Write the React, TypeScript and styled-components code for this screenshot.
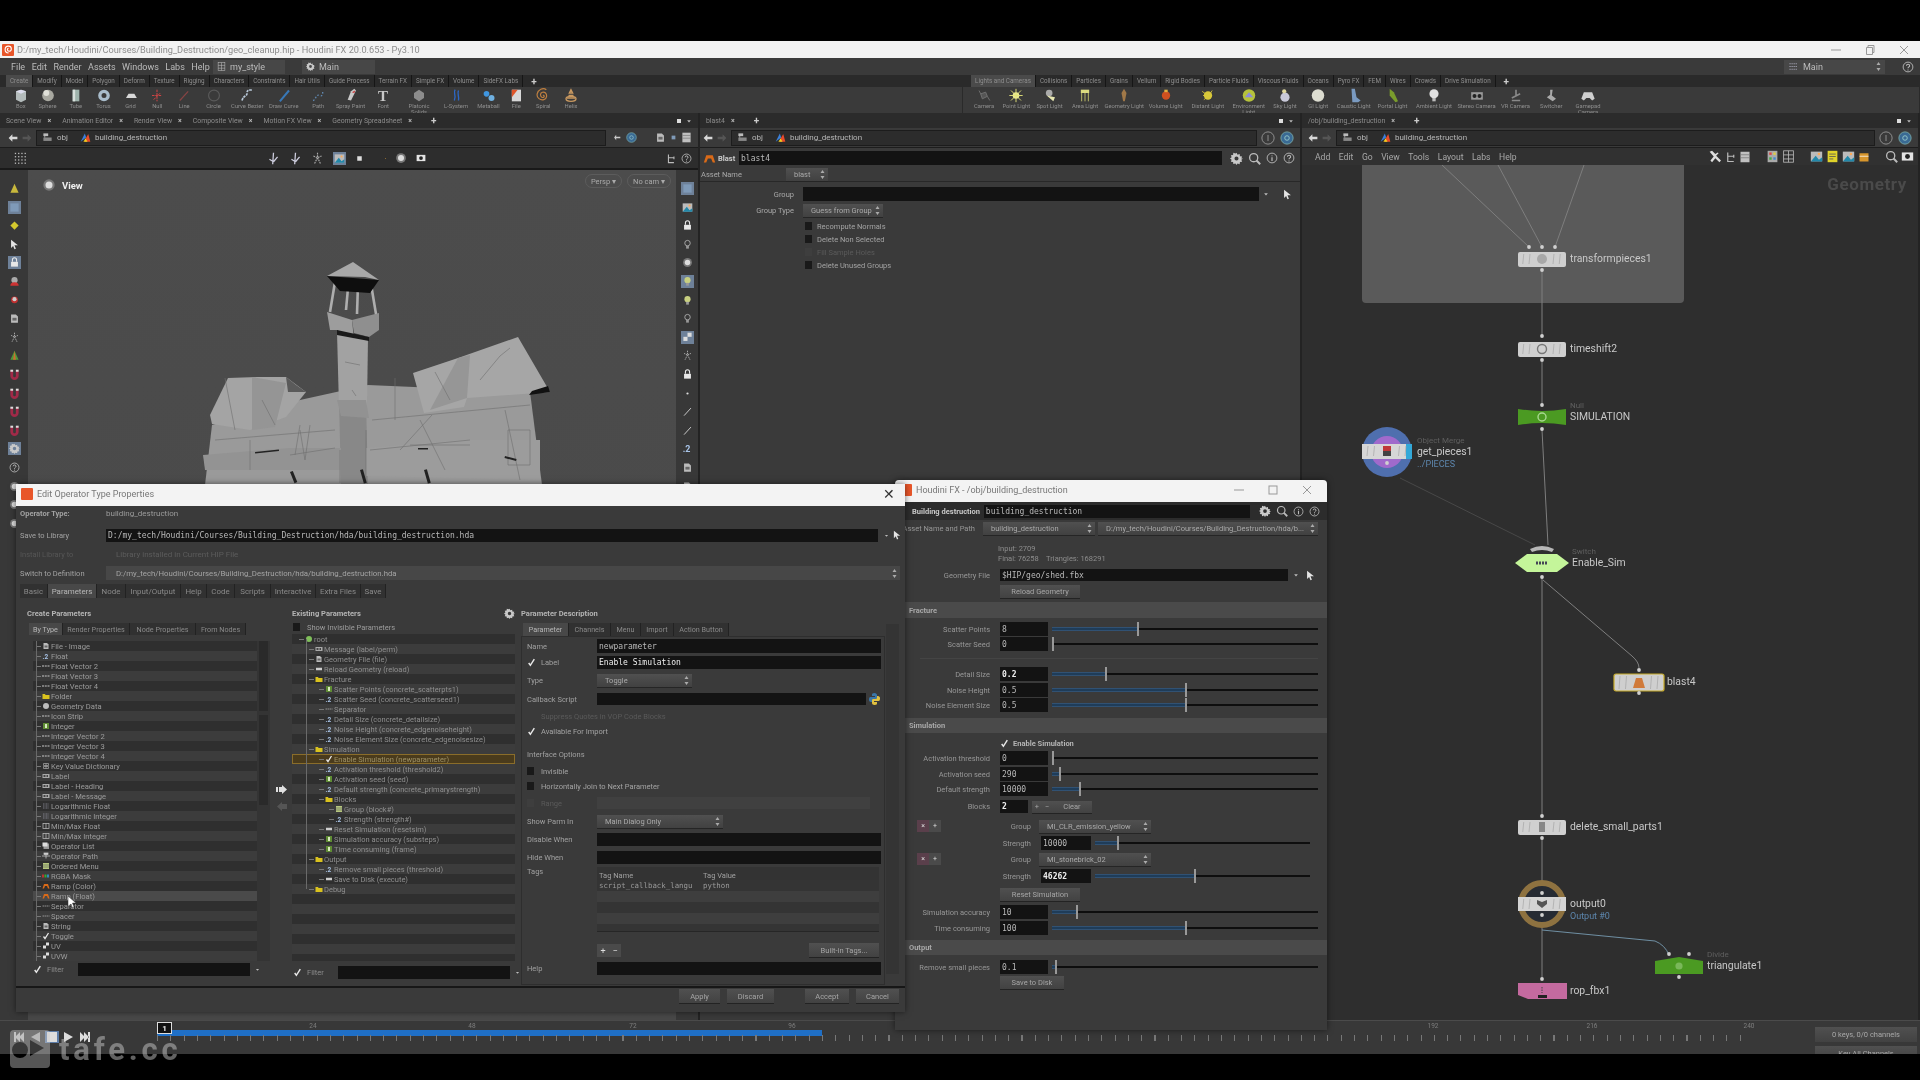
import React from 'react';
import styled, { createGlobalStyle } from 'styled-components';

const Global = createGlobalStyle`
  html, body { margin: 0; padding: 0; background: #000; }
  body { width: 1920px; height: 1080px; overflow: hidden; font-family: Roboto, "Noto Sans", sans-serif; }
`;

const MONO = '"DejaVu Sans Mono", "Liberation Mono", monospace';

/* ---------- shared glyphs ---------- */
const small: Record<string, React.ReactNode> = {
  gear: <path d="M8 1l1.3 2.4 2.6-.9.3 2.7 2.7.3-.9 2.5L16 8l-2 1.5.9 2.5-2.7.3-.3 2.7-2.6-.9L8 16l-1.3-2-2.6.9-.3-2.7-2.7-.3.9-2.5L0 8l2-1.5-.9-2.5 2.7-.3.3-2.7 2.6.9zM8 5.500a2.500 2.500 0 100 5 2.500 2.500 0 000-5z" fill="#c8c8c8" fillRule="evenodd" />,
  search: <g fill="none" stroke="#bbb" strokeWidth="1.6"><circle cx="7" cy="7" r="5" /><path d="M10.500 10.500L15 15" strokeWidth="2.4" /></g>,
  info: <g fill="none" stroke="#bbb" strokeWidth="1.2"><circle cx="8" cy="8" r="6.5" /><path d="M8 4.500v1M8 7v5" strokeWidth="1.6" /></g>,
  help: <g fill="none" stroke="#bbb" strokeWidth="1.2"><circle cx="8" cy="8" r="6.5" /><path d="M6 6.200c0-2.600 4.200-2.600 4.200 0 0 1.800-2.200 1.600-2.200 3.600M8 11.200v1.300" strokeWidth="1.4" /></g>,
  folder: <path d="M1 4h5l1 2h8v8H1z" fill="#d9c21e" />,
  float: <text x="1" y="13" fontSize="13" fontWeight="700" fill="#a8c4e8" fontFamily="Roboto">.2</text>,
  int: <g><rect x="2" y="2" width="12" height="12" fill="#5f8c34" /><rect x="6" y="4" width="4" height="8" fill="#d8e8c0" /></g>,
  toggle: <path d="M3 9l3 4 7-11" fill="none" stroke="#e8e8e8" strokeWidth="2.6" />,
  button: <rect x="2" y="5.5" width="12" height="5" fill="#cfcfcf" />,
  sep: <path d="M1 8h14" stroke="#aaa" strokeWidth="1.6" strokeDasharray="3 1" />,
  vec: <path d="M0 8h16" stroke="#c8c8c8" strokeWidth="2" strokeDasharray="4 1.5" />,
  file: <g><path d="M3 2h7l3 3v9H3z" fill="#bbb" /><rect x="5" y="7" width="6" height="4" fill="#666" /></g>,
  label: <g><rect x="1" y="4" width="14" height="8" fill="#aaa" /><rect x="3" y="6" width="4" height="4" fill="#444" /><rect x="9" y="6" width="3" height="4" fill="#444" /></g>,
  geo: <circle cx="8" cy="8" r="6" fill="#bdbdbd" />,
  root: <circle cx="8" cy="8" r="6" fill="#7fbf5a" />,
  minmax: <g fill="none" stroke="#bbb" strokeWidth="1.5"><rect x="2" y="3" width="12" height="10" /><path d="M8 3v10" /></g>,
  log: <path d="M2 4h12M2 8h12M2 12h12" stroke="#aab" strokeWidth="1.2" strokeDasharray="2 1" />,
  dict: <g fill="none" stroke="#aaa" strokeWidth="1.4"><path d="M3 3h10v4H3zM3 9h10v4H3zM8 3v10" /></g>,
  oplist: <g><rect x="3" y="3" width="11" height="11" fill="#999" /><rect x="1" y="1" width="10" height="8" fill="#ddd" /></g>,
  oppath: <g stroke="#ccc" strokeWidth="1.5"><path d="M0 8h16M8 3v10" /><rect x="4" y="2" width="8" height="3" fill="#ccc" /></g>,
  menu: <g><rect x="2" y="2" width="12" height="12" fill="#b7c77e" /><path d="M2 6h12M2 10h12" stroke="#445" /></g>,
  rgba: <g><rect x="0" y="5" width="4" height="6" fill="#b33" /><rect x="5" y="5" width="4" height="6" fill="#3a3" /><rect x="10" y="5" width="4" height="6" fill="#38b" /></g>,
  ramp: <path d="M1 13l3-9h8l3 9h-3l-2-5H6l-2 5z" fill="#d96a18" />,
  uv: <g><rect x="8" y="1" width="6" height="6" fill="#ddd" /><rect x="2" y="7" width="6" height="6" fill="#ddd" /></g>,
  back: <path d="M1 8l6-6v4h8v4H7v4z" fill="#d8d8d8" />,
  fwd: <path d="M15 8l-6-6v4H1v4h8v4z" fill="#555" />,
  objn: <g><rect x="2" y="2" width="7" height="4" fill="#bbb" /><path d="M2 8h12v5H2z" fill="#888" /><path d="M4 6v2" stroke="#ddd" /></g>,
  hda: <g><path d="M1 14L7 2l2 6z" fill="#3b7fd8" /><path d="M7 14l2-6 3-5 3 11z" fill="#e84a2a" /><path d="M5 14l3-5 3 5z" fill="#f0d020" /></g>,
  pin: <path d="M1 8h5l3-4v3h6v2H9v3L6 8" fill="#ccc" />,
  ring1: <g fill="none" stroke="#9a9a9a" strokeWidth="1"><circle cx="8" cy="8" r="7" /><path d="M8 4.500v7" /></g>,
  ring2: <g><circle cx="8" cy="8" r="7" fill="#3a6a94" stroke="#7aa" /><circle cx="8" cy="8" r="2.6" fill="none" stroke="#9cc" /></g>,
  arrow: <path d="M3 1l10 8H8l2 5-2 1-2-5-3 3z" fill="#e4e4e4" />,
  wrench: <path d="M2 2l5 6-4 5 2 2 4-5 5 5 2-2-6-6 3-3-1-1-3 2-4-4z" fill="#ddd" />,
  sheet: <g><rect x="2" y="1" width="12" height="14" fill="#c0c0c0" /><path d="M2 5h12M2 9h12" stroke="#777" /></g>,
  tree: <path d="M5 2v12h8M5 7h8M13 5v4" stroke="#bbb" strokeWidth="1.6" fill="none" />,
  colors: <g><rect x="2" y="1" width="12" height="14" fill="#aaa" /><rect x="4" y="3" width="3" height="3" fill="#d44" /><rect x="9" y="3" width="3" height="3" fill="#dc4" /><rect x="4" y="9" width="3" height="3" fill="#4a4" /><rect x="9" y="9" width="3" height="3" fill="#48c" /></g>,
  grid3: <g stroke="#bbb" fill="none"><rect x="2" y="1" width="12" height="14" /><path d="M2 6h12M2 11h12M8 1v14" /></g>,
  note: <g><rect x="2" y="1" width="12" height="14" fill="#e0d32a" /><path d="M4 5h8M4 8h8M4 11h5" stroke="#555" /></g>,
  img: <g><rect x="1" y="2" width="14" height="12" fill="#bbb" /><path d="M1 14l6-7 4 5 4-3v5z" fill="#28a" /><circle cx="11" cy="5" r="1.5" fill="#fa5" /></g>,
  box3: <g><rect x="2" y="3" width="12" height="11" fill="#d8962c" /><path d="M2 7h12" stroke="#fff" /></g>,
  cam: <g><rect x="1" y="3" width="14" height="10" fill="#e4e4e4" /><circle cx="8" cy="8" r="3" fill="#222" /></g>,
  dots: <g fill="#bbb">{[2, 6, 10, 14].map(x => [2, 6, 10, 14].map(y => <rect key={`${x}-${y}`} x={x - 1} y={y - 1} width="1.6" height="1.6" />))}</g>,
  handle: <g><path d="M8 1l-1 14M3 9l5 3M13 6l-5 6" stroke="#ccd" strokeWidth="1.6" fill="none" /></g>,
  sel: <rect x="2" y="2" width="12" height="12" fill="#7f9ab8" />,
  white: <rect x="4" y="4" width="8" height="8" fill="#ddd" />,
  drop: <path d="M3 6h10L8 12z" fill="#bbb" />,
  cone: <path d="M8 1l6 13H2z" fill="#c8b83c" />,
  diamond: <path d="M8 2l6 6-6 6-6-6z" fill="#d4c82e" />,
  lock: <g><rect x="3" y="7" width="10" height="7" fill="#e8e8e8" /><path d="M5 7V4a3 3 0 016 0v3" fill="none" stroke="#e8e8e8" strokeWidth="1.6" /></g>,
  red: <g><circle cx="8" cy="6" r="4.5" fill="#aaa" /><path d="M2 14c0-4 3-5 6-5s6 1 6 5z" fill="#c33" /></g>,
  red2: <g><circle cx="8" cy="7" r="5" fill="#c03030" /><circle cx="8" cy="6" r="3" fill="#ccc" /></g>,
  man: <path d="M8 1v5M3 5l5 2 5-2M8 7l-4 8M8 7l4 8" stroke="#aaa" strokeWidth="1.4" fill="none" strokeDasharray="2 1" />,
  tri: <g><path d="M8 1l6 13H2z" fill="#4e9a3a" /><path d="M8 1l2 13H6z" fill="#d06a30" /></g>,
  mag: <g><path d="M2 2h4v8a2 2 0 004 0V2h4v8a6 6 0 01-12 0z" fill="#a02a48" /><rect x="2" y="1" width="4" height="3" fill="#ddd" /><rect x="10" y="1" width="4" height="3" fill="#ddd" /></g>,
  bulb: <g><circle cx="8" cy="6" r="4.5" fill="#c8d080" /><rect x="6" y="10" width="4" height="4" fill="#999" /></g>,
  bulbp: <g><circle cx="8" cy="6" r="4" fill="none" stroke="#ccc" /><rect x="6" y="10" width="4" height="4" fill="#999" /></g>,
  dot: <circle cx="8" cy="8" r="1.6" fill="#ddd" />,
  stroke: <path d="M3 14L13 3" stroke="#ccc" strokeWidth="1.4" />,
  ring: <g><circle cx="8" cy="8" r="6.5" fill="#777" /><circle cx="8" cy="8" r="4" fill="#ddd" /></g>,
  sq: <path d="M3 2v12M3 2h10" stroke="#bbb" strokeWidth="1.5" fill="none" />,
};

const Glyph = ({ k, s = 10 }: { k: string; s?: number }) => (
  <svg width={s} height={s} viewBox="0 0 16 16" style={{ flex: 'none', display: 'block' }}>{small[k]}</svg>
);

const Chevrons = () => (
  <svg width="5" height="9" viewBox="0 0 5 9" style={{ flex: 'none' }}>
    <path d="M2.500 0l2 3h-4zM2.500 9l2-3h-4z" fill="#aaa" />
  </svg>
);

/* ---------- page frame ---------- */
const Page = styled.div`
  position: relative;
  width: 1920px;
  height: 1080px;
  padding-top: 41px;
  box-sizing: border-box;
  background: #000;
  overflow: hidden;
  filter: blur(0.6px);
  font-size: 7.5px;
  color: #b4b4b4;
`;
const Houdini = styled.div`
  display: flex;
  flex-direction: column;
  height: 1013px;
  background: #3a3a3a;
`;
const TitleBar = styled.div`
  height: 17px;
  flex: none;
  background: #f2f2f2;
  display: flex;
  align-items: center;
  padding: 0 0 0 2px;
  gap: 3px;
  color: #8d8d8d;
  font-size: 9.2px;
`;
const AppLogo = styled.span`
  width: 12px;
  height: 12px;
  flex: none;
  background: #e8562a;
  border-radius: 1px;
  display: flex;
  align-items: center;
  justify-content: center;
`;
const Spacer = styled.span`flex: 1;`;
const WinControls = styled.div`
  display: flex;
  align-items: center;
  gap: 24px;
  padding-right: 11px;
`;
const MenuBar = styled.div`
  height: 17px;
  flex: none;
  display: flex;
  align-items: center;
  background: #3a3a3a;
  padding-left: 11px;
  font-size: 9px;
  color: #bcbcbc;
`;
const MenuItems = styled.div`
  display: flex;
  gap: 6.5px;
  width: 202px;
`;
const Selector = styled.div<{ $w: number }>`
  width: ${p => p.$w}px;
  height: 14px;
  background: #474747;
  display: flex;
  align-items: center;
  padding: 0 4px;
  gap: 4px;
  box-sizing: border-box;
  margin-right: 17px;
  font-size: 9px;
`;
const MenuEnd = styled.div`
  display: flex;
  align-items: center;
  padding-right: 6px;
`;

/* ---------- shelves ---------- */
const ShelfRow = styled.div`
  height: 38px;
  flex: none;
  display: flex;
`;
const ShelfSet = styled.div<{ $w?: number }>`
  ${p => (p.$w ? `width: ${p.$w}px; flex: none;` : 'flex: 1;')}
  display: flex;
  flex-direction: column;
  border-right: 1px solid #2a2a2a;
  box-sizing: border-box;
`;
const ShelfTabs = styled.div<{ $pad: number }>`
  height: 12px;
  flex: none;
  background: #2a2a2a;
  display: flex;
  align-items: center;
  padding-left: ${p => p.$pad}px;
  font-size: 6.3px;
  color: #8e8e8e;
`;
const ShelfTab = styled.span<{ $on?: boolean }>`
  height: 12px;
  display: flex;
  align-items: center;
  padding: 0 4px;
  white-space: nowrap;
  border-right: 1px solid #161616;
  background: ${p => (p.$on ? '#4a4a4a' : 'transparent')};
`;
const PlusMark = styled.span`
  color: #ccc;
  font-size: 10px;
  font-weight: 700;
  padding: 0 8px;
`;
const ShelfTools = styled.div<{ $pad: number }>`
  flex: 1;
  display: flex;
  padding-left: ${p => p.$pad}px;
  background: #3a3a3a;
  border-bottom: 1px solid #242424;
`;
const Tool = styled.div<{ $w: number }>`
  width: ${p => p.$w}px;
  flex: none;
  display: flex;
  flex-direction: column;
  align-items: center;
  padding-top: 1px;
  font-size: 5.8px;
  line-height: 6px;
  color: #8f8f8f;
  text-align: center;
`;

/* ---------- panes ---------- */
const Panes = styled.div`
  flex: 1;
  display: flex;
  min-height: 0;
`;
const Pane = styled.div<{ $w?: number }>`
  ${p => (p.$w ? `width: ${p.$w}px; flex: none;` : 'flex: 1;')}
  display: flex;
  flex-direction: column;
  min-width: 0;
  border-right: 2px solid #232323;
  box-sizing: border-box;
`;
const PaneTabs = styled.div`
  height: 15px;
  flex: none;
  background: #2b2b2b;
  display: flex;
  align-items: center;
  font-size: 6.9px;
  color: #8c8c8c;
  padding-left: 6px;
`;
const PaneTab = styled.span`
  display: flex;
  align-items: center;
  gap: 6px;
  padding-right: 11px;
  white-space: nowrap;
`;
const TabClose = styled.span`
  color: #bbb;
  font-size: 7px;
  font-weight: 700;
`;
const TabEnd = styled.span`
  margin-left: auto;
  display: flex;
  gap: 3px;
  align-items: center;
  padding-right: 6px;
`;
const PathBar = styled.div<{ $left: number }>`
  height: 20px;
  flex: none;
  display: flex;
  align-items: center;
  padding: 0 6px 0 ${p => p.$left}px;
  gap: 4px;
  background: #3a3a3a;
  border-bottom: 1px solid #1d1d1d;
  box-sizing: border-box;
`;
const PathField = styled.div`
  flex: 1;
  height: 16px;
  background: #2c2c2c;
  border: 1px solid #1c1c1c;
  display: flex;
  align-items: center;
  gap: 4px;
  padding: 0 5px;
  font-size: 8px;
  color: #b8b8b8;
  box-sizing: border-box;
`;
const PathCrumb = styled.span`
  margin-right: 8px;
`;
const PathEnd = styled.div`
  display: flex;
  align-items: center;
  gap: 5px;
`;
const SceneTools = styled.div`
  height: 22px;
  flex: none;
  display: flex;
  align-items: center;
  padding: 0 6px 0 14px;
  background: #2d2d2d;
  border-bottom: 2px solid #191919;
  box-sizing: border-box;
`;
const ToolCluster = styled.div`
  display: flex;
  align-items: center;
  gap: 9px;
  margin-left: 240px;
`;
const SceneBody = styled.div`
  flex: 1;
  display: flex;
  min-height: 0;
`;
const SideTools = styled.div<{ $w: number }>`
  width: ${p => p.$w}px;
  flex: none;
  display: flex;
  flex-direction: column;
  align-items: center;
  gap: 5.6px;
  padding-top: 12px;
  background: #383838;
`;
const SideIcon = styled.span<{ $on?: boolean }>`
  display: flex;
  padding: 1px;
  background: ${p => (p.$on ? '#6e8199' : 'transparent')};
`;
const Viewport = styled.div`
  flex: 1;
  position: relative;
  background: linear-gradient(#4c4c4c, #484848);
`;
const ViewTitle = styled.div`
  position: absolute;
  left: 14px;
  top: 8px;
  display: flex;
  align-items: center;
  gap: 6px;
  color: #eee;
  font-weight: 700;
  font-size: 9.5px;
`;
const CamPills = styled.div`
  position: absolute;
  top: 4px;
  right: 5px;
  display: flex;
  gap: 5px;
`;
const CamPill = styled.span`
  height: 12px;
  padding: 0 5px;
  display: flex;
  align-items: center;
  border: 1px solid #5c5c5c;
  border-radius: 7px;
  font-size: 7.5px;
  color: #aaa;
`;
const BuildingArt = styled.svg`
  position: absolute;
  inset: 0;
`;

/* ---------- parameter pane ---------- */
const ParamHead = styled.div`
  height: 20px;
  flex: none;
  display: flex;
  align-items: center;
  padding: 0 5px 0 3px;
  gap: 2px;
  font-size: 7.5px;
  font-weight: 700;
  color: #ccc;
`;
const DarkInput = styled.div<{ $w?: number; $bold?: boolean; $lit?: boolean; $h?: number }>`
  ${p => (p.$w ? `width: ${p.$w}px; flex: none;` : 'flex: 1;')}
  height: ${p => p.$h || 14}px;
  background: #131313;
  color: ${p => (p.$bold || p.$lit ? '#eee' : '#b9b9b9')};
  font-family: ${MONO};
  font-size: 8px;
  font-weight: ${p => (p.$bold ? 700 : 400)};
  display: flex;
  align-items: center;
  padding: 0 2px;
  box-sizing: border-box;
  white-space: nowrap;
  overflow: hidden;
`;
const IconGroup = styled.div<{ $gap?: number; $pl?: number }>`
  display: flex;
  align-items: center;
  gap: ${p => p.$gap ?? 5}px;
  padding-left: ${p => p.$pl ?? 0}px;
`;
const BlastAsset = styled.div`
  height: 13px;
  flex: none;
  display: flex;
  align-items: center;
  padding-left: 1px;
  border-bottom: 1px solid #282828;
  gap: 46px;
  color: #a8a8a8;
`;
const Dropdown = styled.div<{ $w: number; $ml?: number }>`
  width: ${p => p.$w}px;
  flex: none;
  margin-left: ${p => p.$ml ?? 0}px;
  height: 13px;
  background: linear-gradient(#505050, #414141);
  box-shadow: 0 1px 0 #252525;
  display: flex;
  align-items: center;
  justify-content: space-between;
  padding: 0 3px 0 8px;
  box-sizing: border-box;
  font-size: 7.5px;
  color: #aaa;
  white-space: nowrap;
  overflow: hidden;
`;
const BlastForm = styled.div`
  display: flex;
  flex-direction: column;
  padding-top: 5px;
`;
const BlastRow = styled.div<{ $h: number; $mt?: number }>`
  height: ${p => p.$h}px;
  margin-top: ${p => p.$mt ?? 0}px;
  display: flex;
  align-items: center;
  gap: 4px;
`;
const BlastLabel = styled.span`
  width: 99px;
  flex: none;
  text-align: right;
  padding-right: 5px;
  box-sizing: border-box;
  color: #a8a8a8;
`;
const CheckBox = styled.span<{ $dim?: boolean }>`
  width: 7px;
  height: 8px;
  flex: none;
  background: ${p => (p.$dim ? '#3e3e3e' : '#191919')};
`;
const CheckLabel = styled.span<{ $dim?: boolean }>`
  color: ${p => (p.$dim ? '#5a5a5a' : '#a4a4a4')};
  white-space: nowrap;
`;
const BlastChecks = styled.div`
  display: flex;
  flex-direction: column;
  gap: 5px;
  padding: 5px 0 0 105px;
`;
const CheckLine = styled.div`
  display: flex;
  height: 8px;
  align-items: center;
  gap: 5px;
`;

/* ---------- network ---------- */
const NetMenu = styled.div`
  height: 17px;
  flex: none;
  display: flex;
  align-items: center;
  padding: 0 4px 0 13px;
  gap: 8.5px;
  font-size: 8.6px;
  color: #a8a8a8;
  background: #313131;
`;
const NetIcons = styled.div`
  margin-left: auto;
  display: flex;
  align-items: center;
  gap: 3px;
`;
const NetGap = styled.span`
  width: 9px;
`;
const Canvas = styled.div`
  flex: 1;
  position: relative;
  background: #2e2e2e;
  overflow: hidden;
`;
const NetBox = styled.div`
  position: absolute;
  left: 60px;
  top: 0;
  width: 322px;
  height: 138px;
  background: #5a5a5a;
  border-radius: 0 0 4px 4px;
`;
const NetKind = styled.div`
  position: absolute;
  right: 11px;
  top: 9px;
  font-size: 17px;
  font-weight: 700;
  letter-spacing: 0.6px;
  color: #4a4a4a;
`;
const Wires = styled.svg`
  position: absolute;
  inset: 0;
`;
const NodeWrap = styled.div<{ $x: number; $y: number }>`
  position: absolute;
  left: ${p => p.$x}px;
  top: ${p => p.$y}px;
  width: 0;
  height: 0;
`;
const NodeArt = styled.svg`
  position: absolute;
  left: -30px;
  top: -30px;
`;
const NodeText = styled.div<{ $dx: number }>`
  position: absolute;
  left: ${p => p.$dx}px;
  top: -7px;
  font-size: 10.4px;
  line-height: 13px;
  color: #c8c8c8;
  white-space: nowrap;
`;
const NodeType = styled.div`
  position: absolute;
  left: 0;
  top: -9px;
  font-size: 8px;
  line-height: 10px;
  color: #5f5f5f;
`;
const NodeNote = styled.div`
  position: absolute;
  left: 0;
  top: 13px;
  font-size: 9px;
  line-height: 13px;
  color: #5d86ad;
`;

/* ---------- timeline ---------- */
const Timeline = styled.div`
  height: 34px;
  flex: none;
  display: flex;
  background: #383838;
  border-top: 1px solid #4b4b4b;
  box-sizing: border-box;
`;
const Transport = styled.div`
  width: 157px;
  flex: none;
  display: flex;
  align-items: flex-end;
  gap: 3px;
  padding: 0 0 11px 12px;
  box-sizing: border-box;
`;
const TransportIcon = styled.span<{ $on?: boolean }>`
  display: flex;
  padding: 1px 2px;
  background: ${p => (p.$on ? '#5d7da8' : 'transparent')};
`;
const Ruler = styled.div`
  width: 1593px;
  flex: none;
  position: relative;
`;
const PlayBar = styled.div`
  position: absolute;
  left: 0;
  top: 9px;
  width: 665px;
  height: 6px;
  background: #1f6fc6;
`;
const Ticks = styled.div`
  position: absolute;
  left: 0;
  right: 0;
  top: 14px;
  height: 6px;
  background: repeating-linear-gradient(90deg, #777 0 1px, transparent 1px 13.3px);
`;
const RulerNum = styled.span`
  position: absolute;
  top: 1px;
  font-size: 6.5px;
  color: #7e7e7e;
  transform: translateX(-50%);
`;
const FrameFlag = styled.span`
  position: absolute;
  left: 0;
  top: 1px;
  width: 15px;
  height: 12px;
  background: #111;
  border: 1px solid #ddd;
  box-sizing: border-box;
  color: #eee;
  font-size: 8px;
  font-weight: 700;
  display: flex;
  align-items: center;
  justify-content: center;
`;
const KeysArea = styled.div`
  flex: 1;
  display: flex;
  flex-direction: column;
  align-items: flex-end;
  gap: 4px;
  padding: 6px 3px 0 0;
  overflow: hidden;
`;
const KeyBtn = styled.div`
  width: 102px;
  height: 15px;
  flex: none;
  background: linear-gradient(#505050, #424242);
  font-size: 7.5px;
  color: #a8a8a8;
  display: flex;
  align-items: center;
  justify-content: center;
`;

/* ---------- floating windows ---------- */
const Win = styled.div<{ $x: number; $y: number; $w: number; $h: number; $round?: boolean }>`
  position: absolute;
  left: ${p => p.$x}px;
  top: ${p => p.$y}px;
  width: ${p => p.$w}px;
  height: ${p => p.$h}px;
  background: #3a3a3a;
  display: flex;
  flex-direction: column;
  box-shadow: 0 0 6px rgba(0, 0, 0, 0.55);
  border-radius: ${p => (p.$round ? '4px 4px 0 0' : '0')};
  overflow: hidden;
`;
const WinTitle = styled.div`
  height: 22px;
  flex: none;
  background: #f3f3f3;
  display: flex;
  align-items: center;
  gap: 4px;
  padding: 0 4px 2px 5px;
  box-sizing: border-box;
  font-size: 9px;
  color: #777;
`;
const CloseX = styled.span`
  color: #333;
  font-size: 14px;
  margin-left: auto;
  padding-right: 6px;
`;
const MetaRow = styled.div<{ $mt?: number }>`
  height: 14px;
  flex: none;
  margin-top: ${p => p.$mt ?? 0}px;
  display: flex;
  align-items: center;
  padding: 0 5px 0 4px;
  color: #9c9c9c;
`;
const MetaLabel = styled.span<{ $bold?: boolean; $dim?: boolean }>`
  width: 86px;
  flex: none;
  font-weight: ${p => (p.$bold ? 700 : 400)};
  color: ${p => (p.$dim ? '#565656' : '#a2a2a2')};
`;
const PlainVal = styled.span<{ $dim?: boolean; $pl?: number }>`
  color: ${p => (p.$dim ? '#5c5c5c' : '#9c9c9c')};
  padding-left: ${p => p.$pl ?? 0}px;
  font-size: 8px;
  white-space: nowrap;
`;
const SwitchField = styled.div`
  flex: 1;
  height: 14px;
  background: #474747;
  display: flex;
  align-items: center;
  justify-content: space-between;
  padding: 0 3px 0 10px;
  font-size: 7.8px;
  color: #a4a4a4;
`;
const TabBar = styled.div<{ $ml: number }>`
  height: 14px;
  flex: none;
  display: flex;
  margin-left: ${p => p.$ml}px;
  margin-top: 4px;
  font-size: 7.9px;
`;
const TabCell = styled.span<{ $w: number; $on?: boolean }>`
  width: ${p => p.$w}px;
  flex: none;
  display: flex;
  align-items: center;
  justify-content: center;
  background: ${p => (p.$on ? '#484848' : '#313131')};
  color: ${p => (p.$on ? '#b8b8b8' : '#8a8a8a')};
  border-right: 1px solid #222;
  box-sizing: border-box;
  white-space: nowrap;
`;
const Split = styled.div`
  height: 388px;
  flex: none;
  display: flex;
`;
const Col = styled.div<{ $w: number; $ml?: number }>`
  width: ${p => p.$w}px;
  flex: none;
  margin-left: ${p => p.$ml ?? 0}px;
  display: flex;
  flex-direction: column;
  padding-top: 10px;
  box-sizing: border-box;
`;
const ColTitle = styled.div`
  height: 10px;
  flex: none;
  display: flex;
  align-items: center;
  justify-content: space-between;
  font-weight: 700;
  font-size: 7.6px;
  color: #b4b4b4;
`;
const InnerTabs = styled.div<{ $h: number }>`
  height: ${p => p.$h}px;
  flex: none;
  margin-top: 5px;
  margin-left: 2px;
  display: flex;
  font-size: 7.2px;
`;
const ListWrap = styled.div<{ $h: number; $m: string }>`
  margin: ${p => p.$m};
  display: flex;
  height: ${p => p.$h}px;
  flex: none;
`;
const Striped = styled.div`
  position: relative;
  flex: 1;
  background: repeating-linear-gradient(#2f2f2f 0 10px, #3c3c3c 10px 20px);
  overflow: hidden;
`;
const ListRow = styled.div<{ $hover?: boolean }>`
  height: 10px;
  display: flex;
  align-items: center;
  padding-left: 3px;
  gap: 1px;
  font-size: 7.6px;
  color: #9c9c9c;
  white-space: nowrap;
  background: ${p => (p.$hover ? '#4a4a4a' : 'transparent')};
`;
const Dash = styled.span`
  width: 5px;
  height: 1px;
  flex: none;
  background: #777;
`;
const VLine = styled.div<{ $x: number; $h: number; $y: number }>`
  position: absolute;
  left: ${p => p.$x}px;
  top: ${p => p.$y}px;
  width: 1px;
  height: ${p => p.$h}px;
  background: #6a6a6a;
`;
const ScrollTrack = styled.div`
  width: 13px;
  flex: none;
  background: #343434;
  display: flex;
  flex-direction: column;
  padding: 0 2px;
  box-sizing: border-box;
`;
const ScrollThumb = styled.div<{ $h: number }>`
  height: ${p => p.$h}px;
  background: #2a2a2a;
  margin-bottom: 4px;
`;
const DescScroll = styled(ScrollTrack)`
  margin: 26px 0 0 1px;
  height: 350px;
`;
const FilterRow = styled.div<{ $ml: number; $mt: number }>`
  height: 14px;
  flex: none;
  display: flex;
  align-items: center;
  margin: ${p => p.$mt}px 0 0 ${p => p.$ml}px;
  gap: 5px;
  color: #8d8d8d;
`;
const MidArrows = styled.div`
  width: 22px;
  flex: none;
  display: flex;
  flex-direction: column;
  align-items: center;
  gap: 8px;
  padding-top: 187px;
`;
const ShowRow = styled.div`
  height: 10px;
  margin: 4px 0 2px 1px;
  display: flex;
  align-items: center;
  gap: 7px;
  color: #9c9c9c;
`;
const TreeRow = styled.div<{ $lvl: number; $sel?: boolean }>`
  height: 10px;
  display: flex;
  align-items: center;
  gap: 1px;
  padding-left: ${p => 7 + p.$lvl * 10}px;
  font-size: 7.5px;
  color: ${p => (p.$sel ? '#9d9166' : '#8f8f8f')};
  white-space: nowrap;
  box-sizing: border-box;
  ${p => (p.$sel ? 'background: #4a3b1c; outline: 1px solid #8a6d2a; outline-offset: -1px;' : '')}
`;
const DescBox = styled.div`
  flex: 1;
  display: flex;
  flex-direction: column;
  padding: 2px 4px 0 5px;
  border: 1px solid #2e2e2e;
  margin-bottom: 1px;
`;
const FormRow = styled.div<{ $h: number; $mt: number }>`
  height: ${p => p.$h}px;
  flex: none;
  margin-top: ${p => p.$mt}px;
  display: flex;
  align-items: center;
`;
const FormLabel = styled.span<{ $dim?: boolean; $w?: number }>`
  width: ${p => p.$w ?? 70}px;
  flex: none;
  color: ${p => (p.$dim ? '#5a5a5a' : '#a0a0a0')};
  white-space: nowrap;
`;
const FormCheck = styled.span<{ $w?: number }>`
  width: ${p => p.$w ?? 14}px;
  flex: none;
  display: flex;
  align-items: center;
`;
const RangeField = styled.div`
  flex: 1;
  height: 12px;
  background: #404040;
  margin-right: 10px;
`;
const TagBlock = styled.div`
  height: 90px;
  flex: none;
  margin-top: 3px;
  display: flex;
`;
const TagMain = styled.div`
  width: 282px;
  display: flex;
  flex-direction: column;
`;
const TagHead = styled.div`
  height: 13px;
  display: flex;
  align-items: flex-end;
  background: #333;
  color: #a0a0a0;
`;
const TagCell = styled.span<{ $w: number; $mono?: boolean }>`
  width: ${p => p.$w}px;
  flex: none;
  padding-left: 2px;
  box-sizing: border-box;
  font-family: ${p => (p.$mono ? MONO : 'inherit')};
  font-size: ${p => (p.$mono ? '7.4px' : '7.5px')};
  overflow: hidden;
  white-space: nowrap;
`;
const TagBody = styled.div`
  height: 52px;
  display: flex;
  align-items: flex-start;
  padding-top: 1px;
  box-sizing: border-box;
  background: repeating-linear-gradient(#343434 0 11px, #3e3e3e 11px 22px);
  color: #999;
  border-bottom: 1px solid #262626;
`;
const TagFoot = styled.div`
  flex: 1;
  display: flex;
  align-items: flex-end;
  justify-content: space-between;
`;
const MiniBtns = styled.div`
  display: flex;
  height: 13px;
  width: 24px;
  background: #4a4a4a;
  align-items: center;
  justify-content: space-around;
  color: #ddd;
  font-size: 9px;
`;
const Btn = styled.div<{ $w: number; $ml?: number; $h?: number }>`
  width: ${p => p.$w}px;
  height: ${p => p.$h ?? 14}px;
  flex: none;
  margin-left: ${p => p.$ml ?? 0}px;
  background: linear-gradient(#505050, #424242);
  box-shadow: 0 1px 0 #232323;
  display: flex;
  align-items: center;
  justify-content: center;
  color: #a6a6a6;
  font-size: 7.5px;
  white-space: nowrap;
`;
const Footer = styled.div`
  flex: 1;
  border-top: 2px solid #171717;
  display: flex;
  align-items: flex-start;
  padding: 1px 6px 0 663px;
`;

/* second window */
const DlgHead = styled.div`
  height: 18px;
  flex: none;
  display: flex;
  align-items: center;
  padding: 0 7px 0 17px;
  gap: 2px;
  font-weight: 700;
  color: #c8c8c8;
  background: #2c2c2c;
`;
const DlgRow = styled.div<{ $mt?: number; $h?: number }>`
  height: ${p => p.$h ?? 14}px;
  flex: none;
  margin-top: ${p => p.$mt ?? 0}px;
  display: flex;
  align-items: center;
  padding-right: 9px;
`;
const DlgLabel = styled.span<{ $w?: number }>`
  width: ${p => p.$w ?? 95}px;
  flex: none;
  text-align: right;
  color: #979797;
  white-space: nowrap;
  overflow: visible;
  padding-right: ${p => (p.$w ? 8 : 0)}px;
  box-sizing: border-box;
`;
const Gap = styled.span<{ $w: number }>`
  width: ${p => p.$w}px;
  flex: none;
`;
const Section = styled.div<{ $mt: number; $h: number }>`
  height: ${p => p.$h}px;
  flex: none;
  margin-top: ${p => p.$mt}px;
  background: #4a4a4a;
  display: flex;
  align-items: center;
  padding-left: 14px;
  font-weight: 700;
  color: #a8a8a8;
`;
const InfoText = styled.div`
  padding-left: 103px;
  line-height: 9.5px;
  color: #8d8d8d;
  margin-top: 9px;
  white-space: pre;
`;
const Track = styled.div`
  position: relative;
  flex: 1;
  height: 2px;
  margin-left: 4px;
  background: #0e0e0e;
`;
const TrackFill = styled.div`
  position: absolute;
  left: 0;
  top: -1px;
  height: 4px;
  background: linear-gradient(#3a5c80, #16324c, #3a5c80);
`;
const TrackKnob = styled.div`
  position: absolute;
  top: -6px;
  width: 2px;
  height: 14px;
  background: #999;
`;
const Hair = styled.div`
  height: 1px;
  margin: 7px 9px 8px 25px;
  background: #444;
  flex: none;
`;
const BlockBtns = styled.div`
  width: 24px;
  height: 12px;
  background: #4a4a4a;
  display: flex;
  margin-left: 22px;
  font-size: 7px;
  color: #ddd;
  align-items: center;
  justify-content: space-between;
  flex: none;
`;
const BlockBad = styled.span`
  width: 12px;
  height: 12px;
  background: #5a3f4b;
  display: flex;
  align-items: center;
  justify-content: center;
`;
const BlockAdd = styled.span`
  width: 12px;
  text-align: center;
`;
const BlockLabel = styled.span`
  width: 90px;
  flex: none;
  text-align: right;
  color: #979797;
`;
const Watermark = styled.div`
  position: absolute;
  left: 10px;
  top: 1030px;
  display: flex;
  align-items: flex-end;
  gap: 9px;
  color: rgba(205, 205, 205, 0.48);
  font-weight: 700;
  font-size: 31px;
  letter-spacing: 3.8px;
  line-height: 36px;
`;
const Cursor = styled.svg`
  position: absolute;
  left: 68px;
  top: 896px;
`;

/* ---------- data ---------- */
const widths = (centers: number[], start: number) => {
  let edge = start;
  return centers.map((c, i) => {
    const next = i < centers.length - 1 ? (c + centers[i + 1]) / 2 : c + (c - edge);
    const w = next - edge;
    edge = next;
    return w;
  });
};

const shelfArt: Record<string, React.ReactNode> = {
  box: <g><path d="M3 4l6-2 6 2v10l-6 3-6-3z" fill="#b4bcbc" /><path d="M3 4l6 3 6-3-6-2z" fill="#dde" /></g>,
  sphere: <g><circle cx="9" cy="9" r="7" fill="#a8a8a0" /><circle cx="7" cy="6" r="3.5" fill="#e0e0d8" /></g>,
  tube: <g><rect x="5" y="2" width="8" height="14" fill="#9fb4ad" /><rect x="5" y="2" width="3" height="14" fill="#d8e0dc" /></g>,
  torus: <circle cx="9" cy="9" r="5" fill="none" stroke="#a9bccb" strokeWidth="4" />,
  grid: <path d="M3 12l3-5h7l3 5z" fill="#d8d8d8" />,
  nul: <path d="M9 2v14M3 9h12M5 14l8-8" stroke="#c44" strokeWidth="1.2" strokeDasharray="3 1" />,
  line: <path d="M4 15L14 4" stroke="#844" strokeWidth="1.4" />,
  circle: <circle cx="9" cy="9" r="6.5" fill="none" stroke="#5a5a5a" strokeWidth="1.4" />,
  curve: <path d="M3 15C5 8 9 11 9 6s5-3 6-4" stroke="#b8c8d8" strokeWidth="2" fill="none" strokeDasharray="3 1" />,
  draw: <path d="M4 16L15 3" stroke="#3878b8" strokeWidth="2.4" />,
  path: <path d="M3 15c4-1 3-8 8-6s3-5 4-6" stroke="#6088b0" strokeWidth="1.6" strokeDasharray="2 2" fill="none" />,
  spray: <g><path d="M9 4l4-3 2 2-6 12-4-1z" fill="#c8c8c8" /><path d="M10 5l4-2-1 3z" fill="#c33" /></g>,
  font: <text x="3" y="16" fontSize="18" fontWeight="700" fill="#c8c8c8" fontFamily="Liberation Serif">T</text>,
  platonic: <path d="M9 2l6 4v6l-6 4-6-4V6z" fill="#8c8c8c" />,
  lsystem: <path d="M8 2c-3 4 2 6-1 13M12 3c-2 4 1 6 0 12" stroke="#2c68c8" strokeWidth="1.6" fill="none" />,
  meta: <g><circle cx="6" cy="7" r="3.4" fill="#3f96e0" /><circle cx="12" cy="12" r="3.6" fill="#6fb0e0" /></g>,
  file: <g><rect x="4" y="2" width="11" height="14" fill="#d8d8d8" /><path d="M4 2h7l-7 9z" fill="#e0562a" /></g>,
  spiral: <path d="M9 9c1-1 2 1 1 2s-4 0-4-3 4-4 6-2 2 7-2 8-9-2-8-7 7-8 11-5" stroke="#c08040" strokeWidth="1.4" fill="none" />,
  helix: <g fill="none" stroke="#c89860" strokeWidth="1.6"><path d="M9 2l-2 4h4zM6 9h6M4 12h10" /><ellipse cx="9" cy="13" rx="6" ry="3" /></g>,
  camera: <path d="M5 7l6-2 2 5-6 3zM5 7L3 3M13 10l3 5" stroke="#777" fill="#555" />,
  point: <g><circle cx="9" cy="9" r="4" fill="#ecec9c" /><path d="M9 1v16M1 9h16M3 3l12 12M15 3L3 15" stroke="#e6e67a" strokeWidth="1.1" /></g>,
  spot: <g><circle cx="8" cy="6" r="4" fill="#aaa" /><path d="M5 9l8 7 2-5z" fill="#e5e5b0" /></g>,
  area: <g><rect x="4" y="2" width="10" height="4" fill="#dcdc80" /><path d="M5 6v10M9 6v10M13 6v10" stroke="#cfcf70" /></g>,
  geo: <path d="M9 1l3 5-2 10H8L6 6z" fill="#a07848" />,
  vol: <g><circle cx="9" cy="9" r="5" fill="#d05020" /><path d="M7 2h4v3H7z" fill="#e0b040" /></g>,
  dist: <g><circle cx="9" cy="9" r="5" fill="#d8c83a" /><path d="M2 4l4 3M3 9h3M4 14l3-2M14 3l-2 3" stroke="#d8c83a" /></g>,
  env: <g><circle cx="9" cy="9" r="7.5" fill="#b6c23c" /><path d="M4 11l5-6 5 6z" fill="#8c8cd8" /></g>,
  sky: <g><circle cx="9" cy="11" r="5.5" fill="#c8c8d8" /><circle cx="8" cy="4" r="2.5" fill="#e0d8a0" /></g>,
  gi: <circle cx="9" cy="9" r="7.5" fill="#dcdcd0" />,
  caustic: <path d="M6 1h4l2 10 5 4-3 2H7z" fill="#7a9ac0" />,
  portal: <path d="M5 1l5 4 5 11-3 1L5 9z" fill="#7a9c2c" />,
  ambient: <g><circle cx="9" cy="7" r="5.5" fill="#e0e0e0" /><rect x="7" y="12" width="4" height="4" fill="#bbb" /></g>,
  stereo: <g><rect x="2" y="5" width="14" height="9" fill="#999" /><circle cx="6" cy="9.5" r="2.4" fill="#222" /><circle cx="12" cy="9.5" r="2.4" fill="#222" /></g>,
  vr: <path d="M4 12l10-5M9 2v8M4 15h10" stroke="#888" strokeWidth="2" />,
  switcher: <path d="M8 2h3l-1 7 5 4-4 3-7-5 4-3z" fill="#aaa" />,
  gamepad: <path d="M4 5h10l3 8-3 2-3-3H7l-3 3-3-2z" fill="#cfcfcf" />,
};
type ToolDef = [string, string, number];
const leftTools: ToolDef[] = [
  ['box', 'Box', 20], ['sphere', 'Sphere', 47], ['tube', 'Tube', 76], ['torus', 'Torus', 104], ['grid', 'Grid', 130],
  ['nul', 'Null', 158], ['line', 'Line', 183], ['circle', 'Circle', 213], ['curve', 'Curve Bezier', 245], ['draw', 'Draw Curve', 286],
  ['path', 'Path', 318], ['spray', 'Spray Paint', 351], ['font', 'Font', 382], ['platonic', 'Platonic Solids', 418], ['lsystem', 'L-System', 458],
  ['meta', 'Metaball', 490], ['file', 'File', 516], ['spiral', 'Spiral', 543], ['helix', 'Helix', 571],
];
const rightTools: ToolDef[] = [
  ['camera', 'Camera', 985], ['point', 'Point Light', 1015], ['spot', 'Spot Light', 1050], ['area', 'Area Light', 1083], ['geo', 'Geometry Light', 1124],
  ['vol', 'Volume Light', 1166], ['dist', 'Distant Light', 1207], ['env', 'Environment Light', 1251], ['sky', 'Sky Light', 1286], ['gi', 'GI Light', 1317],
  ['caustic', 'Caustic Light', 1353], ['portal', 'Portal Light', 1392], ['ambient', 'Ambient Light', 1433], ['stereo', 'Stereo Camera', 1478], ['vr', 'VR Camera', 1517],
  ['switcher', 'Switcher', 1550], ['gamepad', 'Gamepad Camera', 1588],
];
const leftTabs = ['Create', 'Modify', 'Model', 'Polygon', 'Deform', 'Texture', 'Rigging', 'Characters', 'Constraints', 'Hair Utils', 'Guide Process', 'Terrain FX', 'Simple FX', 'Volume', 'SideFX Labs'];
const rightTabs = ['Lights and Cameras', 'Collisions', 'Particles', 'Grains', 'Vellum', 'Rigid Bodies', 'Particle Fluids', 'Viscous Fluids', 'Oceans', 'Pyro FX', 'FEM', 'Wires', 'Crowds', 'Drive Simulation'];
const sceneTabs = ['Scene View', 'Animation Editor', 'Render View', 'Composite View', 'Motion FX View', 'Geometry Spreadsheet'];

const leftSide: [string, boolean?][] = [['cone'], ['sel', true], ['diamond'], ['arrow'], ['lock', true], ['red'], ['red2'], ['file'], ['man'], ['tri'], ['mag'], ['mag'], ['mag'], ['mag'], ['gear', true], ['help'], ['ring'], ['ring'], ['ring']];
const rightSide: [string, boolean?][] = [['sel', true], ['img'], ['lock'], ['bulbp'], ['ring'], ['bulb', true], ['bulb'], ['bulbp'], ['uv', true], ['man'], ['lock'], ['dot'], ['stroke'], ['stroke'], ['float'], ['file'], ['file'], ['sq']];

const typeRows: [string, string][] = [
  ['file', 'File - Image'], ['float', 'Float'], ['vec', 'Float Vector 2'], ['vec', 'Float Vector 3'], ['vec', 'Float Vector 4'], ['folder', 'Folder'],
  ['geo', 'Geometry Data'], ['vec', 'Icon Strip'], ['int', 'Integer'], ['vec', 'Integer Vector 2'], ['vec', 'Integer Vector 3'], ['vec', 'Integer Vector 4'],
  ['dict', 'Key Value Dictionary'], ['label', 'Label'], ['label', 'Label - Heading'], ['label', 'Label - Message'], ['log', 'Logarithmic Float'], ['log', 'Logarithmic Integer'],
  ['minmax', 'Min/Max Float'], ['minmax', 'Min/Max Integer'], ['oplist', 'Operator List'], ['oppath', 'Operator Path'], ['menu', 'Ordered Menu'], ['rgba', 'RGBA Mask'],
  ['ramp', 'Ramp (Color)'], ['ramp', 'Ramp (Float)'], ['sep', 'Separator'], ['sep', 'Spacer'], ['file', 'String'], ['toggle', 'Toggle'], ['uv', 'UV'], ['uv', 'UVW'],
];
const treeRows: [number, string, string][] = [
  [0, 'root', 'root'], [1, 'label', 'Message (label/perm)'], [1, 'file', 'Geometry File (file)'], [1, 'button', 'Reload Geometry (reload)'], [1, 'folder', 'Fracture'],
  [2, 'int', 'Scatter Points (concrete_scatterpts1)'], [2, 'float', 'Scatter Seed (concrete_scatterseed1)'], [2, 'sep', 'Separator'], [2, 'float', 'Detail Size (concrete_detailsize)'],
  [2, 'float', 'Noise Height (concrete_edgenoiseheight)'], [2, 'float', 'Noise Element Size (concrete_edgenoisesize)'], [1, 'folder', 'Simulation'],
  [2, 'toggle', 'Enable Simulation (newparameter)'], [2, 'float', 'Activation threshold (threshold2)'], [2, 'int', 'Activation seed (seed)'], [2, 'float', 'Default strength (concrete_primarystrength)'],
  [2, 'folder', 'Blocks'], [3, 'menu', 'Group (block#)'], [3, 'float', 'Strength (strength#)'], [2, 'button', 'Reset Simulation (resetsim)'], [2, 'int', 'Simulation accuracy (substeps)'],
  [2, 'int', 'Time consuming (frame)'], [1, 'folder', 'Output'], [2, 'float', 'Remove small pieces (threshold)'], [2, 'button', 'Save to Disk (execute)'], [1, 'folder', 'Debug'],
];

const Slider = ({ at }: { at: number }) => (
  <Track>
    <TrackFill style={{ width: `${at * 100}%` }} />
    <TrackKnob style={{ left: `${at * 100}%` }} />
  </Track>
);

const SliderRow = ({ label, value, at, bold, mt }: { label: string; value: string; at: number; bold?: boolean; mt?: number }) => (
  <DlgRow $mt={mt}>
    <DlgLabel>{label}</DlgLabel>
    <Gap $w={10} />
    <DarkInput $w={48} $bold={bold}>{value}</DarkInput>
    <Slider at={at} />
  </DlgRow>
);

const BlockRows = ({ group, value, at, bold, mt }: { group: string; value: string; at: number; bold?: boolean; mt: number }) => (
  <>
    <DlgRow $mt={mt}>
      <BlockBtns><BlockBad>×</BlockBad><BlockAdd>+</BlockAdd></BlockBtns>
      <BlockLabel>Group</BlockLabel>
      <Gap $w={8} />
      <Dropdown $w={112}>{group}<Chevrons /></Dropdown>
    </DlgRow>
    <DlgRow $mt={3}>
      <Gap $w={46} />
      <BlockLabel>Strength</BlockLabel>
      <Gap $w={10} />
      <DarkInput $w={50} $bold={bold}>{value}</DarkInput>
      <Slider at={at} />
      <Gap $w={8} />
    </DlgRow>
  </>
);

type NodeDef = { x: number; y: number; kind: string; name: string; type?: string; note?: string; dx?: number };
const nodes: NodeDef[] = [
  { x: 1542, y: 259, kind: 'xform', name: 'transformpieces1' },
  { x: 1542, y: 349, kind: 'time', name: 'timeshift2' },
  { x: 1542, y: 417, kind: 'nul', name: 'SIMULATION', type: 'Null' },
  { x: 1387, y: 452, kind: 'merge', name: 'get_pieces1', type: 'Object Merge', note: '../PIECES', dx: 30 },
  { x: 1542, y: 563, kind: 'switch', name: 'Enable_Sim', type: 'Switch', dx: 30 },
  { x: 1639, y: 682, kind: 'blast', name: 'blast4' },
  { x: 1542, y: 827, kind: 'del', name: 'delete_small_parts1' },
  { x: 1542, y: 904, kind: 'output', name: 'output0', note: 'Output #0' },
  { x: 1679, y: 966, kind: 'divide', name: 'triangulate1', type: 'Divide' },
  { x: 1542, y: 991, kind: 'rop', name: 'rop_fbx1' },
];

const Stripes = ({ x = 6, w = 48, y = 23, h = 14 }: { x?: number; w?: number; y?: number; h?: number }) => (
  <g stroke="#9e9e9e" strokeWidth="0.6">
    {[0.12, 0.25, 0.75, 0.88].map(f => <path key={f} d={`M${x + w * f} ${y + 2}l-1 ${h - 4}`} />)}
  </g>
);
const Dot = ({ x, y }: { x: number; y: number }) => <circle cx={x} cy={y} r="1.9" fill="#d0d0d0" />;

const nodeArt: Record<string, React.ReactNode> = {
  xform: <g><rect x="6" y="23" width="48" height="15" rx="2" fill="#cfcfcf" /><Stripes /><circle cx="30" cy="30" r="5" fill="#a8a8a8" /><Dot x={17} y={18} /><Dot x={30} y={18} /><Dot x={43} y={18} /><Dot x={30} y={41} /></g>,
  time: <g><rect x="6" y="23" width="48" height="15" rx="2" fill="#cfcfcf" /><Stripes /><circle cx="30" cy="30" r="4.5" fill="none" stroke="#777" strokeWidth="1.4" /><Dot x={30} y={17} /><Dot x={30} y={41} /></g>,
  nul: <g><path d="M6 22q24 4 48 0v16q-24-4-48 0z" fill="#4b9a22" /><circle cx="30" cy="30" r="4" fill="none" stroke="#a8d890" strokeWidth="1.4" /><Dot x={30} y={18} /><Dot x={30} y={42} /></g>,
  merge: <g><circle cx="30" cy="30" r="25" fill="#4f6fae" /><circle cx="30" cy="30" r="16" fill="#a06acc" /><rect x="5" y="22" width="50" height="15" fill="#d6d6d6" /><rect x="49" y="22" width="6" height="15" fill="#33a8d8" /><Stripes x={5} w={50} y={22} /><rect x="26" y="24" width="8" height="10" fill="#c03838" /><rect x="26" y="29" width="8" height="5" fill="#444" /><Dot x={30} y={41} /></g>,
  switch: <g><path d="M18 16q12-6 24 0l-2 3q-10-4-20 0z" fill="#b8b8b8" /><path d="M3 30l12-9h30l12 9-12 9H15z" fill="#c4f59a" /><path d="M24 30h12" stroke="#445" strokeWidth="3" strokeDasharray="2 1" /><Dot x={30} y={44} /></g>,
  blast: <g><rect x="5" y="22" width="50" height="17" rx="2" fill="#cfcfcf" stroke="#c8ac2a" strokeWidth="1.2" /><Stripes x={5} w={50} y={22} h={17} /><path d="M24 36l3-10h6l3 10z" fill="#d07a3a" /><Dot x={30} y={18} /><Dot x={30} y={41} /></g>,
  del: <g><rect x="6" y="23" width="48" height="15" rx="2" fill="#d0d0d0" /><Stripes /><path d="M27 25h6v10h-6z" fill="#888" /><Dot x={30} y={19} /><Dot x={30} y={41} /></g>,
  output: <g><circle cx="30" cy="30" r="21" fill="#262b33" stroke="#8e7240" strokeWidth="6" /><rect x="6" y="23" width="48" height="14" fill="#d4d4d4" /><Stripes /><path d="M25 26l5 2 5-2v4l-5 4-5-4z" fill="#555" /><Dot x={30} y={19} /><Dot x={30} y={41} /></g>,
  divide: <g><path d="M6 25l24-4 24 4v13H6z" fill="#4b9a22" /><circle cx="30" cy="30" r="3.6" fill="#7ab85a" /><Dot x={20} y={18} /><Dot x={40} y={18} /><Dot x={30} y={41} /></g>,
  rop: <g><path d="M6 22h49v16H16l-10-4z" fill="#c46a9f" /><rect x="26" y="34" width="9" height="3" fill="#222" /><path d="M30 26v6" stroke="#444" strokeDasharray="1.5 1" /><Dot x={30} y={18} /></g>,
};

const CX = 1302;
const CY = 165;

export default function App() {
  const lw = widths(leftTools.map(t => t[2]), 8);
  const rw = widths(rightTools.map(t => t[2]), 968);
  return (
    <>
      <Global />
      <Page>
        <Houdini>
          <TitleBar>
            <AppLogo><svg width="9" height="9" viewBox="0 0 16 16"><path d="M8 14a6 6 0 110-12c3 0 5 2 5 5s-2 4-4 4-3-1-3-3 1-2 2-2" fill="none" stroke="#fff" strokeWidth="2" /></svg></AppLogo>
            D:/my_tech/Houdini/Courses/Building_Destruction/geo_cleanup.hip - Houdini FX 20.0.653 - Py3.10
            <Spacer />
            <WinControls>
              <svg width="10" height="10" viewBox="0 0 10 10"><path d="M0 5h10" stroke="#999" /></svg>
              <svg width="10" height="10" viewBox="0 0 10 10"><path d="M1.500 2.500h6v7h-6zM3 2.500V.5h6v7H7.500" fill="none" stroke="#999" /></svg>
              <svg width="10" height="10" viewBox="0 0 10 10"><path d="M1 1l8 8M9 1l-8 8" stroke="#999" /></svg>
            </WinControls>
          </TitleBar>
          <MenuBar>
            <MenuItems>{['File', 'Edit', 'Render', 'Assets', 'Windows', 'Labs', 'Help'].map(m => <span key={m}>{m}</span>)}</MenuItems>
            <Selector $w={72}><Glyph k="grid3" s={9} />my_style</Selector>
            <Selector $w={73}><Glyph k="gear" s={9} />Main</Selector>
            <Spacer />
            <MenuEnd>
              <Selector $w={101}><Glyph k="log" s={11} />Main<Spacer /><Chevrons /></Selector>
              <Glyph k="help" s={12} />
            </MenuEnd>
          </MenuBar>
          <ShelfRow>
            <ShelfSet $w={963}>
              <ShelfTabs $pad={6}>
                {leftTabs.map((t, i) => <ShelfTab key={t} $on={i === 0}>{t}</ShelfTab>)}
                <PlusMark>+</PlusMark>
              </ShelfTabs>
              <ShelfTools $pad={8}>
                {leftTools.map((t, i) => (
                  <Tool key={t[1]} $w={lw[i]}>
                    <svg width="16" height="15" viewBox="0 0 18 18" style={{ flex: 'none' }}>{shelfArt[t[0]]}</svg>
                    {t[1]}
                  </Tool>
                ))}
              </ShelfTools>
            </ShelfSet>
            <ShelfSet>
              <ShelfTabs $pad={8}>
                {rightTabs.map((t, i) => <ShelfTab key={t} $on={i === 0}>{t}</ShelfTab>)}
                <PlusMark>+</PlusMark>
              </ShelfTabs>
              <ShelfTools $pad={5}>
                {rightTools.map((t, i) => (
                  <Tool key={t[1]} $w={rw[i]}>
                    <svg width="16" height="15" viewBox="0 0 18 18" style={{ flex: 'none' }}>{shelfArt[t[0]]}</svg>
                    {t[1]}
                  </Tool>
                ))}
              </ShelfTools>
            </ShelfSet>
          </ShelfRow>
          <Panes>
            <Pane $w={700}>
              <PaneTabs>
                {sceneTabs.map(t => <PaneTab key={t}>{t}<TabClose>×</TabClose></PaneTab>)}
                <PlusMark>+</PlusMark>
                <TabEnd><Glyph k="white" s={8} /><Glyph k="drop" s={6} /></TabEnd>
              </PaneTabs>
              <PathBar $left={8}>
                <Glyph k="back" s={10} /><Glyph k="fwd" s={10} />
                <PathField><Glyph k="objn" s={11} /><PathCrumb>obj</PathCrumb><Glyph k="hda" s={11} />building_destruction</PathField>
                <PathEnd><Glyph k="pin" s={11} /><Glyph k="ring2" s={11} /><Gap $w={8} /><Glyph k="file" s={11} /><Glyph k="sel" s={5} /><Glyph k="sheet" s={11} /></PathEnd>
              </PathBar>
              <SceneTools>
                <Glyph k="dots" s={13} />
                <ToolCluster>
                  <Glyph k="handle" s={13} /><Glyph k="handle" s={13} /><Glyph k="man" s={13} /><SideIcon $on><Glyph k="img" s={11} /></SideIcon><Glyph k="white" s={9} /><Gap $w={3} /><Glyph k="box3" s={1} /><Glyph k="ring" s={12} /><Glyph k="cam" s={10} />
                </ToolCluster>
                <Spacer />
                <IconGroup><Glyph k="tree" s={11} /><Glyph k="help" s={11} /></IconGroup>
              </SceneTools>
              <SceneBody>
                <SideTools $w={28}>
                  {leftSide.map(([k, on], i) => <SideIcon key={i} $on={on}><Glyph k={k} s={11} /></SideIcon>)}
                </SideTools>
                <Viewport>
                  <BuildingArt width="644" height="315" viewBox="28 170 644 315">
                    <polygon points="205,485 212,425 300,400 368,385 530,392 542,485" fill="#9a9a9a" />
                    <polygon points="210,415 228,378 257,377 286,377 306,392 286,417 250,430 212,424" fill="#a4a4a4" />
                    <polygon points="252,377 286,383 275,427 252,430" fill="#959595" />
                    <polygon points="286,377 296,385 306,392 288,392" fill="#5a5a5a" />
                    <polygon points="413,373 458,358 518,337 550,392 467,398 464,407 424,413" fill="#a6a6a6" />
                    <polygon points="458,358 470,355 467,398 430,410" fill="#969696" />
                    <polygon points="529,395 550,392 548,386 532,391" fill="#111" />
                    <polygon points="339,400 366,400 368,485 341,485" fill="#888" />
                    <polygon points="337,332 368,337 367,407 339,407" fill="#a2a2a2" />
                    <polygon points="337,400 366,400 369,418 341,416" fill="#929292" />
                    <polygon points="327,312 352,320 354,340 337,330 330,330" fill="#9d9d9d" />
                    <polygon points="352,320 379,313 379,330 369,337 354,333" fill="#8f8f8f" />
                    <polygon points="337,330 369,337 369,341 337,335" fill="#1a1a1a" />
                    <g stroke="#aeaeae" strokeWidth="2.6"><path d="M335,282 L330,312" /><path d="M348,288 L346,310" /><path d="M358,284 L357,314" /><path d="M371,284 L376,314" /></g>
                    <polygon points="327,276 379,280 370,293 340,291" fill="#0e0e0e" />
                    <polygon points="353,262 327,276 365,277 379,280" fill="#a8a8a8" />
                    <polygon points="203,455 290,448 341,448 341,470 205,470" fill="#939393" />
                    <polygon points="366,448 460,440 540,440 540,480 366,476" fill="#9c9c9c" />
                    <g fill="none" stroke="#6e6e6e" strokeWidth="0.6">
                      <path d="M225,378 L235,430M262,400 L275,425M345,362 L360,365M352,390 L356,396M395,378 L395,420M435,372 L450,400M480,380 L500,356L510,348M432,415 L400,450" />
                      <path d="M215,440 L335,430M372,420 L530,405M250,440 L250,470M300,430 L305,460M420,420 L445,470M505,410 L520,480M340,450 L340,483M366,430 L366,483M410,445 L470,445M290,455 L335,448M300,425 L295,455M310,425 L305,460M370,450 L470,440" />
                      <path d="M508,430 L530,430L530,465L508,465Z" />
                    </g>
                    <g fill="#222">
                      <rect x="505" y="456" width="12" height="2" transform="rotate(15 505 456)" />
                      <rect x="255" y="452" width="24" height="1.5" transform="rotate(-6 255 452)" />
                      <rect x="360" y="470" width="3" height="14" transform="rotate(-16 360 470)" />
                      <rect x="424" y="470" width="3" height="14" transform="rotate(-16 424 470)" />
                      <rect x="290" y="472" width="3" height="12" transform="rotate(-22 290 472)" />
                      <rect x="418" y="448" width="10" height="1.5" />
                    </g>
                  </BuildingArt>
                  <ViewTitle><Glyph k="ring" s={14} />View</ViewTitle>
                  <CamPills><CamPill>Persp ▾</CamPill><CamPill>No cam ▾</CamPill></CamPills>
                </Viewport>
                <SideTools $w={22}>
                  {rightSide.map(([k, on], i) => <SideIcon key={i} $on={on}><Glyph k={k} s={11} /></SideIcon>)}
                </SideTools>
              </SceneBody>
            </Pane>
            <Pane $w={602}>
              <PaneTabs>
                <PaneTab>blast4<TabClose>×</TabClose></PaneTab>
                <PlusMark>+</PlusMark>
                <TabEnd><Glyph k="white" s={8} /><Glyph k="drop" s={6} /></TabEnd>
              </PaneTabs>
              <PathBar $left={3}>
                <Glyph k="back" s={10} /><Glyph k="fwd" s={10} />
                <PathField><Glyph k="objn" s={11} /><PathCrumb>obj</PathCrumb><Glyph k="hda" s={11} />building_destruction</PathField>
                <PathEnd><Glyph k="ring1" s={14} /><Glyph k="ring2" s={14} /></PathEnd>
              </PathBar>
              <ParamHead>
                <Glyph k="ramp" s={13} />Blast&nbsp;
                <DarkInput>blast4</DarkInput>
                <IconGroup $pl={6} $gap={5}><Glyph k="gear" s={13} /><Glyph k="search" s={13} /><Glyph k="info" s={12} /><Glyph k="help" s={12} /></IconGroup>
              </ParamHead>
              <BlastAsset>Asset Name<Dropdown $w={42} $ml={-2}>blast<Chevrons /></Dropdown></BlastAsset>
              <BlastForm>
                <BlastRow $h={14}>
                  <BlastLabel>Group</BlastLabel>
                  <DarkInput $w={456}> </DarkInput>
                  <Glyph k="drop" s={6} />
                  <Gap $w={5} />
                  <Glyph k="arrow" s={11} />
                </BlastRow>
                <BlastRow $h={13} $mt={3}>
                  <BlastLabel>Group Type</BlastLabel>
                  <Dropdown $w={80}>Guess from Group<Chevrons /></Dropdown>
                </BlastRow>
              </BlastForm>
              <BlastChecks>
                <CheckLine><CheckBox /><CheckLabel>Recompute Normals</CheckLabel></CheckLine>
                <CheckLine><CheckBox /><CheckLabel>Delete Non Selected</CheckLabel></CheckLine>
                <CheckLine><CheckBox $dim /><CheckLabel $dim>Fill Sample Holes</CheckLabel></CheckLine>
                <CheckLine><CheckBox /><CheckLabel>Delete Unused Groups</CheckLabel></CheckLine>
              </BlastChecks>
            </Pane>
            <Pane>
              <PaneTabs>
                <PaneTab>/obj/building_destruction<TabClose>×</TabClose></PaneTab>
                <PlusMark>+</PlusMark>
                <TabEnd><Glyph k="white" s={8} /><Glyph k="drop" s={6} /></TabEnd>
              </PaneTabs>
              <PathBar $left={6}>
                <Glyph k="back" s={10} /><Glyph k="fwd" s={10} />
                <PathField><Glyph k="objn" s={11} /><PathCrumb>obj</PathCrumb><Glyph k="hda" s={11} />building_destruction</PathField>
                <PathEnd><Glyph k="ring1" s={14} /><Glyph k="ring2" s={14} /></PathEnd>
              </PathBar>
              <NetMenu>
                {['Add', 'Edit', 'Go', 'View', 'Tools', 'Layout', 'Labs', 'Help'].map(m => <span key={m}>{m}</span>)}
                <NetIcons>
                  <Glyph k="wrench" s={13} /><Glyph k="tree" s={12} /><Glyph k="sheet" s={12} /><NetGap />
                  <Glyph k="colors" s={13} /><Glyph k="grid3" s={13} /><NetGap />
                  <Glyph k="img" s={13} /><Glyph k="note" s={13} /><Glyph k="img" s={13} /><Glyph k="box3" s={12} /><NetGap />
                  <Glyph k="search" s={13} /><Glyph k="cam" s={13} />
                </NetIcons>
              </NetMenu>
              <Canvas>
                <NetBox />
                <NetKind>Geometry</NetKind>
                <Wires width="618" height="855" viewBox={`${CX} ${CY} 618 855`} fill="none">
                  <g stroke="#7e7e7e" strokeWidth="1">
                    <path d="M1442 165L1529 247M1498 165L1542 247M1584 165L1555 247" />
                    <path d="M1542 270V337M1542 362V404M1542 430L1548 545" />
                    <path d="M1542 578V816M1542 838V885M1542 925V979" />
                    <path d="M1543 580L1632 656Q1639 662 1639 668" />
                  </g>
                  <path d="M1400 478L1535 545" stroke="#484848" />
                  <path d="M1542 930L1655 941Q1665 945 1669 955" stroke="#6f8fa3" />
                </Wires>
                {nodes.map(n => (
                  <NodeWrap key={n.name} $x={n.x - CX} $y={n.y - CY}>
                    <NodeArt width="60" height="60" viewBox="0 0 60 60">{nodeArt[n.kind]}</NodeArt>
                    <NodeText $dx={n.dx ?? 28}>
                      {n.type && <NodeType>{n.type}</NodeType>}
                      {n.name}
                      {n.note && <NodeNote>{n.note}</NodeNote>}
                    </NodeText>
                  </NodeWrap>
                ))}
              </Canvas>
            </Pane>
          </Panes>
          <Timeline>
            <Transport>
              <TransportIcon><svg width="10" height="10" viewBox="0 0 10 10"><path d="M0 0h2v10H0zM10 0v10L5 5zM6 0v10L1 5z" fill="#bbb" /></svg></TransportIcon>
              <TransportIcon><svg width="9" height="10" viewBox="0 0 9 10"><path d="M9 0v10L0 5z" fill="#aaa" /></svg></TransportIcon>
              <TransportIcon $on><svg width="10" height="10" viewBox="0 0 10 10"><rect width="10" height="10" fill="#ddd" /></svg></TransportIcon>
              <TransportIcon><svg width="9" height="10" viewBox="0 0 9 10"><path d="M0 0v10l9-5z" fill="#ddd" /></svg></TransportIcon>
              <TransportIcon><svg width="10" height="10" viewBox="0 0 10 10"><path d="M8 0h2v10H8zM0 0v10l5-5zM4 0v10l5-5z" fill="#ddd" /></svg></TransportIcon>
            </Transport>
            <Ruler>
              {[['24', 156], ['48', 315], ['72', 476], ['96', 635], ['192', 1276], ['216', 1435], ['240', 1592]].map(([n, x]) => (
                <RulerNum key={n} style={{ left: Number(x) }}>{n}</RulerNum>
              ))}
              <PlayBar />
              <Ticks />
              <FrameFlag>1</FrameFlag>
            </Ruler>
            <KeysArea>
              <KeyBtn>0 keys, 0/0 channels</KeyBtn>
              <KeyBtn>Key All Channels</KeyBtn>
            </KeysArea>
          </Timeline>
        </Houdini>

        <Win $x={895} $y={480} $w={432} $h={550} $round>
          <WinTitle>
            <AppLogo /> Houdini FX - /obj/building_destruction
            <Spacer />
            <WinControls>
              <svg width="10" height="10" viewBox="0 0 10 10"><path d="M0 5h10" stroke="#999" /></svg>
              <svg width="10" height="10" viewBox="0 0 10 10"><rect x="1" y="1" width="8" height="8" fill="none" stroke="#999" /></svg>
              <svg width="10" height="10" viewBox="0 0 10 10"><path d="M1 1l8 8M9 1l-8 8" stroke="#999" /></svg>
            </WinControls>
          </WinTitle>
          <DlgHead>
            Building destruction&nbsp;
            <DarkInput $w={266} $h={13}>building_destruction</DarkInput>
            <Spacer />
            <IconGroup $gap={5}><Glyph k="gear" s={12} /><Glyph k="search" s={12} /><Glyph k="info" s={11} /><Glyph k="help" s={11} /></IconGroup>
          </DlgHead>
          <DlgRow $mt={2} $h={13}>
            <DlgLabel $w={88}>Asset Name and Path</DlgLabel>
            <Dropdown $w={112}>building_destruction<Chevrons /></Dropdown>
            <Gap $w={3} />
            <Dropdown $w={220}>D:/my_tech/Houdini/Courses/Building_Destruction/hda/b...<Chevrons /></Dropdown>
          </DlgRow>
          <InfoText>{'Input: 2709\nFinal: 76258    Triangles: 168291'}</InfoText>
          <DlgRow $mt={6} $h={12}>
            <DlgLabel>Geometry File</DlgLabel>
            <Gap $w={10} />
            <DarkInput $w={288} $h={12}>$HIP/geo/shed.fbx</DarkInput>
            <Gap $w={5} /><Glyph k="drop" s={6} /><Gap $w={6} /><Glyph k="arrow" s={11} />
          </DlgRow>
          <DlgRow $mt={4} $h={13}><Gap $w={105} /><Btn $w={80} $h={13}>Reload Geometry</Btn></DlgRow>
          <Section $mt={4} $h={16}>Fracture</Section>
          <SliderRow mt={4} label="Scatter Points" value="8" at={0.32} />
          <SliderRow mt={1} label="Scatter Seed" value="0" at={0} />
          <Hair />
          <SliderRow label="Detail Size" value="0.2" at={0.2} bold />
          <SliderRow mt={2} label="Noise Height" value="0.5" at={0.5} />
          <SliderRow mt={1} label="Noise Element Size" value="0.5" at={0.5} />
          <Section $mt={6} $h={15}>Simulation</Section>
          <DlgRow $mt={5} $h={10}><Gap $w={105} /><Glyph k="toggle" s={9} /><Gap $w={4} /><b>Enable Simulation</b></DlgRow>
          <SliderRow mt={3} label="Activation threshold" value="0" at={0} />
          <SliderRow mt={2} label="Activation seed" value="290" at={0.025} />
          <SliderRow mt={1} label="Default strength" value="10000" at={0.1} />
          <DlgRow $mt={4} $h={13}>
            <DlgLabel>Blocks</DlgLabel><Gap $w={10} />
            <DarkInput $w={28} $h={13} $bold>2</DarkInput>
            <Gap $w={4} /><Btn $w={10} $h={12}>+</Btn><Btn $w={10} $h={12}>−</Btn>
            <Btn $w={40} $h={12}>Clear</Btn>
          </DlgRow>
          <BlockRows mt={6} group="MI_CLR_emission_yellow" value="10000" at={0.1} />
          <BlockRows mt={2} group="MI_stonebrick_02" value="46262" at={0.46} bold />
          <DlgRow $mt={5} $h={13}><Gap $w={105} /><Btn $w={80} $h={13}>Reset Simulation</Btn></DlgRow>
          <SliderRow mt={4} label="Simulation accuracy" value="10" at={0.09} />
          <SliderRow mt={2} label="Time consuming" value="100" at={0.5} />
          <Section $mt={5} $h={15}>Output</Section>
          <SliderRow mt={5} label="Remove small pieces" value="0.1" at={0.01} />
          <DlgRow $mt={2} $h={13}><Gap $w={105} /><Btn $w={64} $h={13}>Save to Disk</Btn></DlgRow>
        </Win>

        <Win $x={16} $y={484} $w={889} $h={528}>
          <WinTitle>
            <AppLogo /> Edit Operator Type Properties
            <CloseX>✕</CloseX>
          </WinTitle>
          <MetaRow><MetaLabel $bold>Operator Type:</MetaLabel><PlainVal>building_destruction</PlainVal></MetaRow>
          <MetaRow $mt={8}>
            <MetaLabel>Save to Library</MetaLabel>
            <DarkInput $w={772} $h={13}>D:/my_tech/Houdini/Courses/Building_Destruction/hda/building_destruction.hda</DarkInput>
            <Gap $w={6} /><Glyph k="drop" s={5} /><Gap $w={3} /><Glyph k="arrow" s={10} />
          </MetaRow>
          <MetaRow $mt={5}><MetaLabel $dim>Install Library to</MetaLabel><PlainVal $dim $pl={10}>Library installed in Current HIP File</PlainVal></MetaRow>
          <MetaRow $mt={5}>
            <MetaLabel>Switch to Definition</MetaLabel>
            <SwitchField>D:/my_tech/Houdini/Courses/Building_Destruction/hda/building_destruction.hda<Chevrons /></SwitchField>
          </MetaRow>
          <TabBar $ml={4}>
            {([['Basic', 28], ['Parameters', 49, true], ['Node', 29], ['Input/Output', 55], ['Help', 26], ['Code', 28], ['Scripts', 36], ['Interactive', 45], ['Extra Files', 45], ['Save', 25]] as [string, number, boolean?][]).map(([t, w, on]) => (
              <TabCell key={t} $w={w} $on={on}>{t}</TabCell>
            ))}
          </TabBar>
          <Split>
            <Col $w={243} $ml={11}>
              <ColTitle>Create Parameters</ColTitle>
              <InnerTabs $h={12}>
                <TabCell $w={34} $on>By Type</TabCell>
                <TabCell $w={67}>Render Properties</TabCell>
                <TabCell $w={66}>Node Properties</TabCell>
                <TabCell $w={50}>From Nodes</TabCell>
              </InnerTabs>
              <ListWrap $h={320} $m="6px 0 0 6px">
                <Striped>
                  <VLine $x={3} $y={0} $h={320} />
                  {typeRows.map(([k, t]) => (
                    <ListRow key={t} $hover={t === 'Ramp (Float)'}><Dash /><Glyph k={k} s={8} />{t}</ListRow>
                  ))}
                </Striped>
                <ScrollTrack><ScrollThumb $h={70} /><ScrollThumb $h={90} /></ScrollTrack>
              </ListWrap>
              <FilterRow $ml={6} $mt={1}>
                <Glyph k="toggle" s={9} /><span>Filter</span><Gap $w={4} />
                <DarkInput $w={172} $h={13}> </DarkInput>
                <Glyph k="drop" s={5} />
              </FilterRow>
            </Col>
            <MidArrows>
              <svg width="11" height="9" viewBox="0 0 11 9"><path d="M0 2h2v5H0zM3 2h3V0l5 4.500L6 9V7H3z" fill="#e0e0e0" /></svg>
              <svg width="11" height="9" viewBox="0 0 11 9"><path d="M11 2H6V0L1 4.500 6 9V7h5z" fill="#555" /></svg>
            </MidArrows>
            <Col $w={223}>
              <ColTitle>Existing Parameters<Glyph k="gear" s={11} /></ColTitle>
              <ShowRow><CheckBox />Show Invisible Parameters</ShowRow>
              <ListWrap $h={327} $m="0">
                <Striped>
                  <VLine $x={14} $y={5} $h={250} />
                  {treeRows.map(([lvl, k, t]) => (
                    <TreeRow key={t} $lvl={lvl} $sel={t.startsWith('Enable')}><Dash /><Glyph k={k} s={8} />{t}</TreeRow>
                  ))}
                </Striped>
              </ListWrap>
              <FilterRow $ml={1} $mt={4}>
                <Glyph k="toggle" s={9} /><span>Filter</span><Gap $w={4} />
                <DarkInput $w={172} $h={13}> </DarkInput>
                <Glyph k="drop" s={5} />
              </FilterRow>
            </Col>
            <Col $w={364} $ml={6}>
              <ColTitle>Parameter Description</ColTitle>
              <InnerTabs $h={13}>
                <TabCell $w={46} $on>Parameter</TabCell>
                <TabCell $w={42}>Channels</TabCell>
                <TabCell $w={30}>Menu</TabCell>
                <TabCell $w={33}>Import</TabCell>
                <TabCell $w={55}>Action Button</TabCell>
              </InnerTabs>
              <DescBox>
                <FormRow $h={14} $mt={0}><FormLabel>Name</FormLabel><DarkInput $w={284}>newparameter</DarkInput></FormRow>
                <FormRow $h={13} $mt={3}>
                  <FormCheck><Glyph k="toggle" s={9} /></FormCheck><FormLabel $w={56}>Label</FormLabel>
                  <DarkInput $w={284} $h={13} $lit>Enable Simulation</DarkInput>
                </FormRow>
                <FormRow $h={13} $mt={5}><FormLabel>Type</FormLabel><Dropdown $w={95}>Toggle<Chevrons /></Dropdown></FormRow>
                <FormRow $h={12} $mt={6}>
                  <FormLabel>Callback Script</FormLabel>
                  <DarkInput $w={269} $h={12}> </DarkInput>
                  <Gap $w={3} />
                  <svg width="11" height="12" viewBox="0 0 11 12"><path d="M5.500 0C3 0 3 1 3 2v1h3v1H1.500C0 4 0 6 0 7s1 2 2 2h1V7.500C3 6.500 4 6 5 6h2c1 0 1-1 1-1.500V2C8 1 7 0 5.500 0z" fill="#3a76a8" /><path d="M5.500 12C8 12 8 11 8 10V9H5V8h4.500C11 8 11 6 11 5S10 3 9 3H8v1.500C8 5.500 7 6 6 6H4C3 6 3 7 3 7.500V10c0 1 1 2 2.500 2z" fill="#e0c040" /></svg>
                </FormRow>
                <FormRow $h={10} $mt={6}><FormCheck /><CheckLabel $dim>Suppress Quotes in VOP Code Blocks</CheckLabel></FormRow>
                <FormRow $h={10} $mt={5}><FormCheck><Glyph k="toggle" s={9} /></FormCheck><CheckLabel>Available For Import</CheckLabel></FormRow>
                <FormRow $h={10} $mt={13}><FormLabel>Interface Options</FormLabel></FormRow>
                <FormRow $h={10} $mt={7}><FormCheck><CheckBox /></FormCheck><CheckLabel>Invisible</CheckLabel></FormRow>
                <FormRow $h={10} $mt={5}><FormCheck><CheckBox /></FormCheck><CheckLabel>Horizontally Join to Next Parameter</CheckLabel></FormRow>
                <FormRow $h={12} $mt={6}>
                  <FormCheck><CheckBox $dim /></FormCheck><FormLabel $dim $w={56}>Range</FormLabel>
                  <RangeField />
                </FormRow>
                <FormRow $h={12} $mt={6}><FormLabel>Show Parm In</FormLabel><Dropdown $w={126}>Main Dialog Only<Chevrons /></Dropdown></FormRow>
                <FormRow $h={13} $mt={6}><FormLabel>Disable When</FormLabel><DarkInput $w={284} $h={13}> </DarkInput></FormRow>
                <FormRow $h={13} $mt={5}><FormLabel>Hide When</FormLabel><DarkInput $w={284} $h={13}> </DarkInput></FormRow>
                <TagBlock>
                  <FormLabel>Tags</FormLabel>
                  <TagMain>
                    <TagHead><TagCell $w={104}>Tag Name</TagCell><TagCell $w={168}>Tag Value</TagCell></TagHead>
                    <TagBody><TagCell $w={104} $mono>script_callback_langu</TagCell><TagCell $w={168} $mono>python</TagCell></TagBody>
                    <TagFoot>
                      <MiniBtns><span>+</span><span>−</span></MiniBtns>
                      <Btn $w={70}>Built-in Tags...</Btn>
                    </TagFoot>
                  </TagMain>
                </TagBlock>
                <FormRow $h={13} $mt={5}><FormLabel>Help</FormLabel><DarkInput $w={284} $h={13}> </DarkInput></FormRow>
              </DescBox>
            </Col>
            <DescScroll><ScrollThumb $h={0} /></DescScroll>
          </Split>
          <Footer>
            <Btn $w={41}>Apply</Btn>
            <Btn $w={47} $ml={7}>Discard</Btn>
            <Btn $w={44} $ml={31}>Accept</Btn>
            <Btn $w={43} $ml={7}>Cancel</Btn>
          </Footer>
        </Win>

        <Watermark>
          <svg width="40" height="38" viewBox="0 0 40 38"><path d="M4 0h32a4 4 0 014 4v30a4 4 0 01-4 4H4a4 4 0 01-4-4V4a4 4 0 014-4zm6 12a8 8 0 100 16 8 8 0 000-16zm10-2l14 8-14 8z" fill="rgba(205,205,205,.42)" fillRule="evenodd" /></svg>
          tafe.cc
        </Watermark>
        <Cursor width="8" height="12" viewBox="0 0 8 12"><path d="M0 0l8 7H4.500L6 11l-1.500 1L3 8 0 10.500z" fill="#fff" stroke="#333" strokeWidth=".5" /></Cursor>
      </Page>
    </>
  );
}
